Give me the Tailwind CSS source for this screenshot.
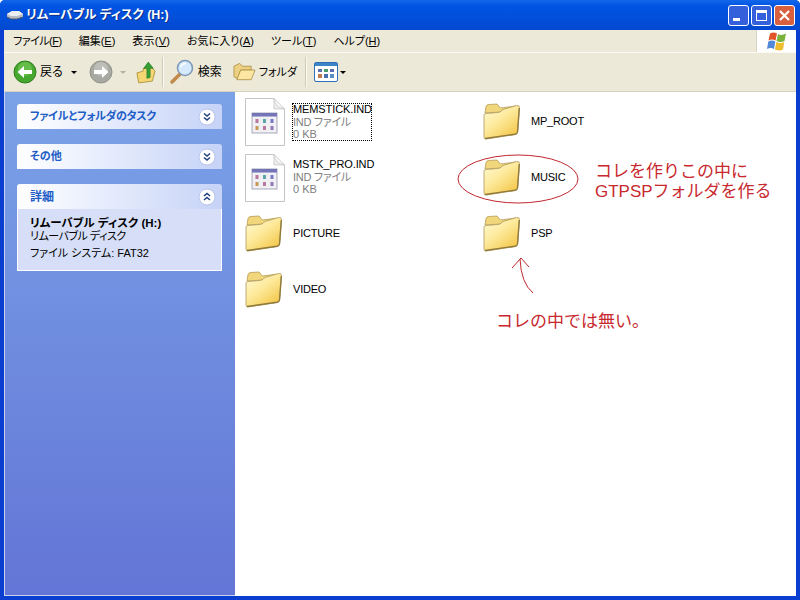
<!DOCTYPE html>
<html lang="ja">
<head>
<meta charset="UTF-8">
<title>リムーバブル ディスク (H:)</title>
<script src="https://cdn.jsdelivr.net/npm/@tailwindcss/browser@4"></script>
</head>
<body class="w-[800px] h-[600px] overflow-hidden bg-white font-['Liberation_Sans','Noto_Sans_CJK_JP',sans-serif] [font-feature-settings:'palt'] text-[12px] text-black">
<svg width="0" height="0" class="absolute">
  <defs>
    <linearGradient id="fg" x1="0" y1="0" x2="0.8" y2="1"><stop offset="0" stop-color="#fffbd8"/><stop offset="0.5" stop-color="#fde99a"/><stop offset="1" stop-color="#f3c545"/></linearGradient>
    <symbol id="folder" viewBox="0 0 37 37">
      <path d="M2 10 L3 3.500 Q3.500 1.500 6 1.500 L14 1 L17.500 5 L33 3 L34 8 Z" fill="#f2d67c" stroke="#b59c58" stroke-width="0.800"/>
      <path d="M1 12.500 Q1 10.500 3 10.500 L15 9.500 Q18 9 20 6.500 L33.500 2.500 Q36.500 2 36.500 4.500 L34.500 29 Q34.200 31 32 31.500 L3.500 36 Q1 36.500 1 34 Z" fill="url(#fg)" stroke="#b09a5c" stroke-width="0.800"/>
      <path d="M2 35.500 L32 31.200 Q34.300 30.800 34.600 28.500 L36.300 5" fill="none" stroke="#8f7a3c" stroke-width="1.400"/>
    </symbol>
    <symbol id="inddoc" viewBox="0 0 40 48">
      <path d="M0.500 0.500 H29 L39.500 11 V47.500 H0.500 Z" fill="#fff" stroke="#c4c4c4"/>
      <path d="M29 0.500 Q30 9 39.500 11 L29 11 Z" fill="#ececec" stroke="#c4c4c4" stroke-width="0.700"/>
      <rect x="7" y="15" width="25" height="20" fill="#efeff4" stroke="#a8a8b8"/>
      <rect x="7" y="15" width="25" height="3.500" fill="#7474b8"/>
      <rect x="10.500" y="21" width="3" height="4" fill="#b878a0"/><rect x="18" y="21" width="3" height="4" fill="#58a8a8"/><rect x="25.500" y="21" width="3" height="4" fill="#7878c8"/>
      <rect x="10.500" y="28" width="3" height="4" fill="#c89858"/><rect x="18" y="28" width="3" height="4" fill="#b878a0"/><rect x="25.500" y="28" width="3" height="4" fill="#9078b8"/>
    </symbol>
    <symbol id="chev-down" viewBox="0 0 18 18">
      <circle cx="9" cy="9" r="8" fill="#fff" stroke="#b8c4e8"/>
      <path d="M6 5.500 L9 8 L12 5.500 M6 9.500 L9 12 L12 9.500" fill="none" stroke="#1f3f7c" stroke-width="1.500"/>
    </symbol>
    <symbol id="chev-up" viewBox="0 0 18 18">
      <circle cx="9" cy="9" r="8" fill="#fff" stroke="#b8c4e8"/>
      <path d="M6 8 L9 5.500 L12 8 M6 12 L9 9.500 L12 12" fill="none" stroke="#1f3f7c" stroke-width="1.500"/>
    </symbol>
  </defs>
</svg>

<div class="relative w-[800px] h-[600px] flex flex-col bg-[#0a3ed0] rounded-t-[5px] overflow-hidden px-[4px] pb-[4px]">
  <!-- title bar -->
  <div class="-mx-[4px] h-[30px] shrink-0 flex items-center pl-[6px] pr-[5px] bg-gradient-to-b from-[#1466ea] from-0% via-[#0054e3] via-20% to-[#0349d0]">
    <svg width="18" height="14" viewBox="0 0 18 14" class="mr-[2px]">
      <path d="M1 6 L6 3 H13 L17 6 V9 L11 11 H5 L1 9 Z" fill="#b8bcc4"/>
      <path d="M1 6 L6 3 H13 L17 6 L11 8 H5 Z" fill="#eceef2"/>
      <path d="M1 9 L5 11 H11 L17 9" fill="none" stroke="#555a66"/>
    </svg>
    <span class="text-white font-bold text-[12.5px] [text-shadow:1px_1px_0_#0f2f8a]">リムーバブル ディスク (H:)</span>
    <div class="ml-auto flex gap-[2px]">
      <div class="w-[21px] h-[21px] rounded-[3px] border border-white bg-[#3560dc] flex items-end pl-[4px] pb-[4px]"><div class="w-[7px] h-[3px] bg-white"></div></div>
      <div class="w-[21px] h-[21px] rounded-[3px] border border-white bg-[#3560dc] flex items-center justify-center"><div class="w-[11px] h-[11px] border border-white border-t-[3px]"></div></div>
      <div class="w-[21px] h-[21px] rounded-[3px] border border-white bg-[#d9603e] flex items-center justify-center">
        <svg width="13" height="13" viewBox="0 0 13 13"><path d="M2 2 L11 11 M11 2 L2 11" stroke="#fff" stroke-width="2.200"/></svg>
      </div>
    </div>
  </div>

  <!-- menu bar -->
  <div class="h-[23px] shrink-0 flex bg-[#ece9d8] border-b border-[#fbfaf4]">
    <div class="flex-1 flex items-center pl-[9px] gap-[17px] text-[11px]">
      <span class="tracking-[-0.5px]">ファイル(<u>F</u>)</span>
      <span>編集(<u>E</u>)</span>
      <span class="tracking-[0.2px]">表示(<u>V</u>)</span>
      <span>お気に入り(<u>A</u>)</span>
      <span>ツール(<u>T</u>)</span>
      <span>ヘルプ(<u>H</u>)</span>
    </div>
    <div class="w-[40px] bg-white border-l border-[#d8d5c4] flex items-center justify-center">
      <svg width="22" height="21" viewBox="0 0 22 21">
        <path d="M4 2.500 Q7.500 0.500 11 2.500 L9.500 9.500 Q6 7.500 2.500 9.500 Z" fill="#e2532a"/>
        <path d="M12 3 Q15.500 5 20 2.500 L18.500 10 Q14.500 12 10.500 10 Z" fill="#7ab23c"/>
        <path d="M2.300 10.500 Q6 8.500 9.300 10.500 L8 18 Q4.500 16 1 18 Z" fill="#5288d8"/>
        <path d="M10.300 11 Q14.500 13 18.300 11 L17 18.500 Q13.500 20.500 9 18.500 Z" fill="#f0bd2e"/>
      </svg>
    </div>
  </div>

  <!-- toolbar -->
  <div class="h-[39px] shrink-0 flex items-center bg-[#ece9d8] border-b border-[#d6d2bd] pl-[9px]">
    <svg width="24" height="24" viewBox="0 0 24 24"><circle cx="12" cy="12" r="11" fill="#46a82e" stroke="#2f7f20"/><circle cx="12" cy="9" r="7" fill="#7dcb5e" opacity="0.600"/><path d="M19 10 H11 V6 L4.500 12 L11 18 V14 H19 Z" fill="#fff"/></svg>
    <span class="ml-[3px]">戻る</span>
    <span class="ml-[8px] border-x-[3px] border-x-transparent border-t-[3px] border-t-black"></span>
    <svg width="24" height="24" viewBox="0 0 24 24" class="ml-[12px]"><circle cx="12" cy="12" r="11" fill="#a9a9a3" stroke="#92928c"/><circle cx="12" cy="9" r="7" fill="#c8c8c2" opacity="0.700"/><path d="M5 10 H13 V6 L19.500 12 L13 18 V14 H5 Z" fill="#fff"/></svg>
    <span class="ml-[7px] border-x-[3px] border-x-transparent border-t-[3px] border-t-[#b5b2a4]"></span>
    <svg width="20" height="26" viewBox="0 0 22 26" class="ml-[10px]">
      <path d="M1 14 L8 12 L8 9 L17 8 L21 12 L18 23 L3 25 Z" fill="#f4d675" stroke="#b0933c"/>
      <path d="M12 20 V9 H8.500 L13.500 2 L19 9 H15.500 V19 Z" fill="#35a035" stroke="#1f7a1f" stroke-width="0.700"/>
    </svg>
    <div class="ml-[6px] h-[30px] w-[2px] bg-[#cfcbb6] border-r border-[#fbfaf4]"></div>
    <svg width="26" height="26" viewBox="0 0 26 26" class="ml-[5px]">
      <path d="M3 23 L11 15" stroke="#c08a4c" stroke-width="3.500" stroke-linecap="round"/>
      <circle cx="16" cy="9" r="7.500" fill="#d5eafc" stroke="#7f99b8" stroke-width="1.600"/>
      <path d="M11.500 8 Q13 4.500 17 4.500" fill="none" stroke="#fff" stroke-width="1.500"/>
    </svg>
    <span class="ml-[3px]">検索</span>
    <svg width="23" height="20" viewBox="0 0 24 20" class="ml-[11px]">
      <path d="M1 4 L7 1 L10 4 L19 4 L19 8 L8 8 L5 17 L1 15 Z" fill="#ecd182" stroke="#a8893c" stroke-width="0.800"/>
      <path d="M4 18 L8 8 L23 8 L19 18 Z" fill="#fbe7a3" stroke="#a8893c" stroke-width="0.800"/>
    </svg>
    <span class="ml-[3px] w-[38px] whitespace-nowrap text-[11px]">フォルダ</span>
    <div class="ml-[8px] h-[30px] w-[2px] bg-[#cfcbb6] border-r border-[#fbfaf4]"></div>
    <svg width="24" height="20" viewBox="0 0 24 20" class="ml-[7px]">
      <rect x="0.500" y="0.500" width="23" height="19" rx="1.500" fill="#fff" stroke="#2f6fb8"/>
      <rect x="1" y="1" width="22" height="3" fill="#3b84c8"/>
      <g fill="#5a6fb0"><rect x="4" y="7" width="4" height="3"/><rect x="10" y="7" width="4" height="3" fill="#4a9a70"/><rect x="16" y="7" width="4" height="3" fill="#5a6fb0"/></g>
      <g><rect x="4" y="12" width="4" height="4" fill="#c07a50"/><rect x="10" y="12" width="4" height="4" fill="#4a6fb0"/><rect x="16" y="12" width="4" height="4" fill="#5a8fc0"/></g>
    </svg>
    <span class="ml-[2px] border-x-[3px] border-x-transparent border-t-[3px] border-t-black"></span>
  </div>

  <!-- body -->
  <div class="flex-1 min-h-0 flex">
    <!-- sidebar -->
    <div class="w-[231px] shrink-0 bg-gradient-to-b from-[#7ba2e7] to-[#6375d6] border-l border-b border-[#c8d2ee] pl-[12px] pr-[13px] pt-[12px] flex flex-col gap-[15px]">
      <div class="h-[25px] rounded-t-[3px] bg-gradient-to-r from-white to-[#c6d3f7] flex items-center justify-between pl-[13px] pr-[6px]">
        <span class="font-bold text-[11px] tracking-[-0.3px] text-[#215dc6]">ファイルとフォルダのタスク</span>
        <svg width="18" height="18"><use href="#chev-down"/></svg>
      </div>
      <div class="h-[25px] rounded-t-[3px] bg-gradient-to-r from-white to-[#c6d3f7] flex items-center justify-between pl-[13px] pr-[6px]">
        <span class="font-bold text-[11px] text-[#215dc6]">その他</span>
        <svg width="18" height="18"><use href="#chev-down"/></svg>
      </div>
      <div>
        <div class="h-[25px] rounded-t-[3px] bg-gradient-to-r from-white to-[#c6d3f7] flex items-center justify-between pl-[13px] pr-[6px]">
          <span class="font-bold text-[12px] text-[#215dc6]">詳細</span>
          <svg width="18" height="18"><use href="#chev-up"/></svg>
        </div>
        <div class="h-[62px] bg-[#d6dff7] border border-t-0 border-white pl-[12px] pt-[8px] text-[11px] leading-[13px]">
          <div class="font-bold text-[11.5px]">リムーバブル ディスク (H:)</div>
          <div class="tracking-[-0.5px]">リムーバブル ディスク</div>
          <div class="mt-[4px]">ファイル システム: FAT32</div>
        </div>
      </div>
    </div>

    <!-- file list -->
    <div class="flex-1 min-w-0 bg-white relative pl-[10px] pt-[6px] text-[11px]">
      <div class="grid grid-cols-[238px_238px] auto-rows-[56px]">
        <div class="flex items-start gap-[7px]">
          <svg width="40" height="48" class="shrink-0"><use href="#inddoc"/></svg>
          <div class="leading-[12.5px] pt-[5px]">
            <div class="w-[80px] h-[38px] border border-dotted border-black">
              <div class="-mt-[1px] tracking-[-0.1px]">MEMSTICK.IND</div>
              <div class="text-[#808080] tracking-[-0.3px]">IND ファイル</div>
              <div class="text-[#808080]">0 KB</div>
            </div>
          </div>
        </div>
        <div class="flex items-start gap-[11px]">
          <svg width="37" height="37" class="shrink-0 mt-[5px]"><use href="#folder"/></svg>
          <div class="pt-[16px] leading-[14px] tracking-[-0.2px]">MP_ROOT</div>
        </div>
        <div class="flex items-start gap-[8px]">
          <svg width="40" height="48" class="shrink-0"><use href="#inddoc"/></svg>
          <div class="leading-[12.5px] pt-[4px]">
            <div class="tracking-[-0.1px]">MSTK_PRO.IND</div>
            <div class="text-[#808080] tracking-[-0.3px]">IND ファイル</div>
            <div class="text-[#808080]">0 KB</div>
          </div>
        </div>
        <div class="flex items-start gap-[11px]">
          <svg width="37" height="37" class="shrink-0 mt-[5px]"><use href="#folder"/></svg>
          <div class="pt-[16px] leading-[14px] tracking-[-0.2px]">MUSIC</div>
        </div>
        <div class="flex items-start gap-[11px]">
          <svg width="37" height="37" class="shrink-0 mt-[5px]"><use href="#folder"/></svg>
          <div class="pt-[16px] leading-[14px] tracking-[-0.2px]">PICTURE</div>
        </div>
        <div class="flex items-start gap-[11px]">
          <svg width="37" height="37" class="shrink-0 mt-[5px]"><use href="#folder"/></svg>
          <div class="pt-[16px] leading-[14px] tracking-[-0.2px]">PSP</div>
        </div>
        <div class="flex items-start gap-[11px]">
          <svg width="37" height="37" class="shrink-0 mt-[5px]"><use href="#folder"/></svg>
          <div class="pt-[16px] leading-[14px] tracking-[-0.2px]">VIDEO</div>
        </div>
      </div>
    </div>
  </div>

  <!-- red annotations drawn over the window -->
  <svg class="absolute left-0 top-0 pointer-events-none" width="800" height="600" viewBox="0 0 800 600">
    <ellipse cx="518" cy="179" rx="60" ry="24" fill="none" stroke="#c0282e" stroke-width="1"/>
    <path d="M533 293 Q521 283 520 259 M512 268 L521 258 L529 267" fill="none" stroke="#c0282e" stroke-width="1"/>
  </svg>
  <div class="absolute left-[595px] top-[162px] text-[17px] leading-[20px] [font-feature-settings:normal] text-[#c8282e] whitespace-nowrap">コレを作りこの中に<br>GTPSPフォルダを作る</div>
  <div class="absolute left-[496px] top-[312px] text-[17px] leading-[20px] [font-feature-settings:normal] text-[#c8282e] whitespace-nowrap">コレの中では無い。</div>
</div>
</body>
</html>
